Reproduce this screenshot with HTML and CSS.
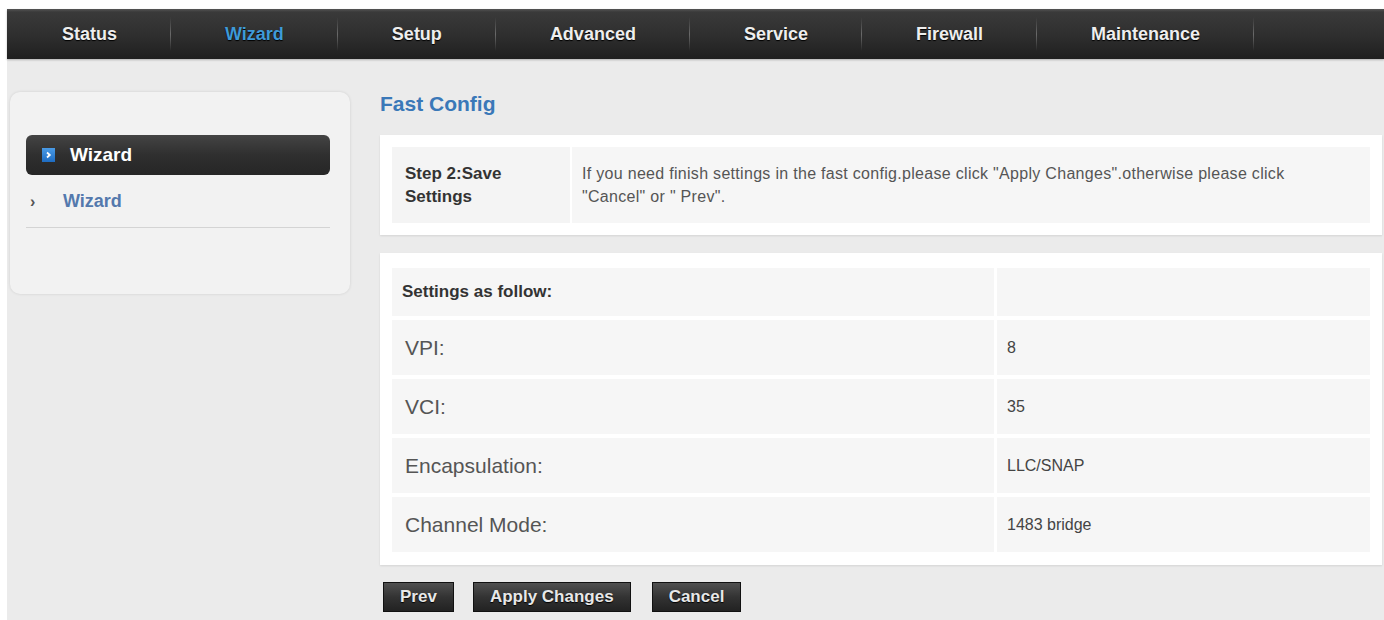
FILE: index.html
```
<!DOCTYPE html>
<html lang="en">
<head>
    <meta charset="UTF-8">
    <meta name="viewport" content="width=device-width, initial-scale=1.0">
    <title>Fast Config - Wizard</title>
    <link rel="stylesheet" href="styles.css">
</head>
<body>
    <div class="frame">
        <!-- main menu -->
        <ul class="topnav">
            <li>Status</li>
            <li class="current">Wizard</li>
            <li>Setup</li>
            <li>Advanced</li>
            <li>Service</li>
            <li>Firewall</li>
            <li>Maintenance</li>
        </ul>

        <div class="page">
            <div class="sidebar">
                <div class="side-head">
                    <span class="side-icon">
                        <svg width="13" height="14" viewBox="0 0 13 14"><path d="M5 4.5 L7.8 7 L5 9.5" fill="none" stroke="#fff" stroke-width="1.8"/></svg>
                    </span>
                    Wizard
                </div>
                <div class="side-link"><span class="arrow">&rsaquo;</span>Wizard</div>
            </div>

            <div class="content">
                <h2 class="title">Fast Config</h2>

                <div class="panel step">
                    <div class="step-name">Step 2:Save Settings</div>
                    <div class="step-desc">If you need finish settings in the fast config.please click "Apply Changes".otherwise please click "Cancel" or " Prev".</div>
                </div>

                <div class="panel">
                    <table class="summary">
                        <tr class="head"><td>Settings as follow:</td><td></td></tr>
                        <tr><td>VPI:</td><td>8</td></tr>
                        <tr><td>VCI:</td><td>35</td></tr>
                        <tr><td>Encapsulation:</td><td>LLC/SNAP</td></tr>
                        <tr><td>Channel Mode:</td><td>1483 bridge</td></tr>
                    </table>
                </div>

                <div class="actions">
                    <button>Prev</button>
                    <button>Apply Changes</button>
                    <button class="cancel">Cancel</button>
                </div>
            </div>
        </div>
    </div>
</body>
</html>
```
FILE: styles.css
```
*{
    box-sizing: border-box;
}
body{
    margin: 0;
    padding: 9px 0 0 7px;
    background-color: #fff;
    font-family: "Liberation Sans", Arial, Helvetica, sans-serif;
    color: #444;
}
.frame{
    background-color: #ebebeb;
    min-height: 611px;
}

/* top menu bar */
.topnav{
    display: flex;
    margin: 0;
    padding: 0 0 0 1px;
    list-style: none;
    height: 50px;
    background: linear-gradient(#555 0, #3a3a3a 3px, #2e2e2e 55%, #1f1f1f 100%);
    box-shadow: 0 1px 2px rgba(0,0,0,0.25);
}
.topnav li{
    position: relative;
    padding: 0 54px;
    line-height: 50px;
    font-size: 18px;
    font-weight: bold;
    color: #eee;
    text-shadow: 0 1px 1px #000;
}
.topnav li::after{
    content: "";
    position: absolute;
    right: 0;
    top: 8px;
    bottom: 8px;
    width: 1px;
    background: linear-gradient(rgba(120,120,120,0), #6a6a6a 50%, rgba(120,120,120,0));
}
.topnav li.current{
    color: #3f9ad8;
}

.page{
    display: flex;
    padding: 33px 2px 0 3px;
}

/* left menu */
.sidebar{
    width: 340px;
    height: 202px;
    padding: 43px 20px 0 16px;
    background-color: #f2f2f2;
    border-radius: 10px;
    box-shadow: 0 0 3px rgba(0,0,0,0.12);
}
.side-head{
    display: flex;
    align-items: center;
    height: 40px;
    padding-left: 16px;
    border-radius: 6px;
    background: linear-gradient(#444, #2f2f2f 50%, #262626);
    color: #fff;
    font-size: 19px;
    font-weight: bold;
}
.side-icon{
    display: flex;
    width: 13px;
    height: 14px;
    margin-right: 15px;
    background: linear-gradient(#4a9be6, #1e6cc2);
}
.side-link{
    height: 53px;
    padding-left: 4px;
    line-height: 52px;
    border-bottom: 1px solid #d4d4d4;
    color: #5479ad;
    font-size: 18px;
    font-weight: bold;
}
.side-link .arrow{
    display: inline-block;
    width: 33px;
    color: #555;
    font-size: 16px;
}

/* right side */
.content{
    flex: 1;
    margin-left: 30px;
}
.title{
    margin: 0 0 19px;
    line-height: 24px;
    font-size: 21px;
    color: #3a78b8;
}
.panel{
    background-color: #fff;
    box-shadow: 0 1px 2px rgba(0,0,0,0.1);
}
.step{
    display: flex;
    gap: 2px;
    padding: 12px;
}
.step-name{
    width: 178px;
    padding: 15px 13px;
    background-color: #f4f4f4;
    font-size: 17px;
    font-weight: bold;
    line-height: 23px;
    color: #333;
}
.step-desc{
    flex: 1;
    padding: 15px 20px 15px 10px;
    background-color: #f6f6f6;
    font-size: 16px;
    letter-spacing: 0.3px;
    line-height: 23px;
    color: #555;
}

.panel + .panel{
    margin-top: 18px;
}
.summary{
    width: 100%;
    border-spacing: 3px 4px;
    padding: 11px 9px 9px;
}
.summary td{
    height: 55px;
    padding: 0 7px 0 13px;
    background-color: #f6f6f6;
    font-size: 21px;
    color: #555;
}
.summary td:first-child{
    width: 602px;
}
.summary td + td{
    padding-left: 10px;
    font-size: 16px;
    color: #444;
}
.summary .head td{
    height: 48px;
    padding-left: 10px;
    font-size: 17px;
    font-weight: bold;
    color: #333;
}

.actions{
    display: flex;
    gap: 19px;
    margin-top: 17px;
    padding-left: 3px;
}
.actions button{
    height: 30px;
    padding: 0 16px;
    border: 1px solid #111;
    background: linear-gradient(#505050, #333 50%, #222);
    color: #e8e8e8;
    font-family: inherit;
    font-size: 17px;
    font-weight: bold;
    text-shadow: 0 1px 1px #000;
}
.actions .cancel{
    margin-left: 2px;
}
```
